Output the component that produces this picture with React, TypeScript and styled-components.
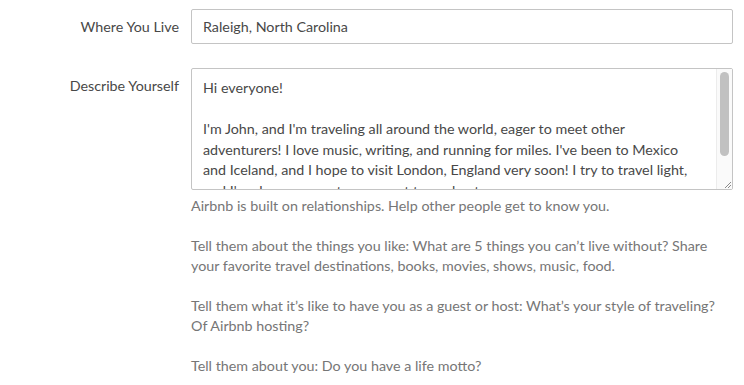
import React from "react";
import styled, { createGlobalStyle } from "styled-components";

const Global = createGlobalStyle`
  html, body { margin: 0; padding: 0; background: #fff; }
  body { font-family: Lato, "Noto Sans", sans-serif; color: #484848; }
  * { box-sizing: border-box; }
`;

const Form = styled.div`
  display: flex;
  flex-direction: column;
  gap: 24px;
  padding: 9px 11px 0 0;
`;

const Row = styled.div`
  display: grid;
  grid-template-columns: 179px 1fr;
  column-gap: 12px;
  align-items: start;
`;

const Label = styled.label<{ $top: number }>`
  text-align: right;
  font-size: 14.3px;
  line-height: 20px;
  color: #484848;
  padding-top: ${(p) => p.$top}px;
`;

const TextInput = styled.input`
  display: block;
  width: 100%;
  height: 35px;
  border: 1px solid #c4c4c4;
  border-radius: 2px;
  padding: 0 11px;
  font-family: inherit;
  font-size: 14.3px;
  color: #484848;
  outline: none;
`;

const Field = styled.div`
  display: flex;
  flex-direction: column;
`;

const AreaWrap = styled.div`
  position: relative;
`;

const TextArea = styled.textarea`
  display: block;
  width: 100%;
  height: 122px;
  border: 1px solid #c4c4c4;
  border-radius: 2px;
  padding: 9.25px 34px 10px 11px;
  font-family: inherit;
  font-size: 14.3px;
  line-height: 20.5px;
  color: #484848;
  resize: vertical;
  outline: none;
  overflow-y: hidden;
`;

const ScrollTrack = styled.div`
  position: absolute;
  top: 1px;
  right: 1px;
  bottom: 16px;
  width: 16px;
  background: #fafafa;
  border-left: 1px solid #ececec;
  padding: 3px 3px 0 3px;
  pointer-events: none;
`;

const ScrollThumb = styled.div`
  height: 84px;
  border-radius: 5px;
  background: #c1c1c1;
`;

const Corner = styled.div`
  position: absolute;
  right: 1px;
  bottom: 1px;
  width: 16px;
  height: 15px;
  background: #fafafa;
  border-left: 1px solid #ececec;
  pointer-events: none;
  display: flex;
  align-items: flex-end;
  justify-content: flex-end;
`;

const Help = styled.div`
  margin-top: 6px;
  display: flex;
  flex-direction: column;
  gap: 20px;
`;

const HelpText = styled.p`
  margin: 0;
  font-size: 14.3px;
  line-height: 20px;
  color: #767676;
`;

const bio = `Hi everyone!

I'm John, and I'm traveling all around the world, eager to meet other adventurers! I love music, writing, and running for miles. I've been to Mexico and Iceland, and I hope to visit London, England very soon! I try to travel light, and I'm always a courteous guest to my host.`;

export default function App() {
  return (
    <>
      <Global />
      <Form>
        <Row>
          <Label $top={8}>Where You Live</Label>
          <TextInput defaultValue="Raleigh, North Carolina" />
        </Row>
        <Row>
          <Label $top={8}>Describe Yourself</Label>
          <Field>
            <AreaWrap>
              <TextArea defaultValue={bio} />
              <ScrollTrack>
                <ScrollThumb />
              </ScrollTrack>
              <Corner>
                <svg width="9" height="9" viewBox="0 0 9 9">
                  <path d="M8 2 L2 8 M8 5 L5 8" stroke="#8a8a8a" strokeWidth="1" />
                </svg>
              </Corner>
            </AreaWrap>
            <Help>
              <HelpText>Airbnb is built on relationships. Help other people get to know you.</HelpText>
              <HelpText>
                Tell them about the things you like: What are 5 things you can’t live without? Share your favorite travel destinations, books, movies, shows, music, food.
              </HelpText>
              <HelpText>
                Tell them what it’s like to have you as a guest or host: What’s your style of traveling? Of Airbnb hosting?
              </HelpText>
              <HelpText>Tell them about you: Do you have a life motto?</HelpText>
            </Help>
          </Field>
        </Row>
      </Form>
    </>
  );
}
